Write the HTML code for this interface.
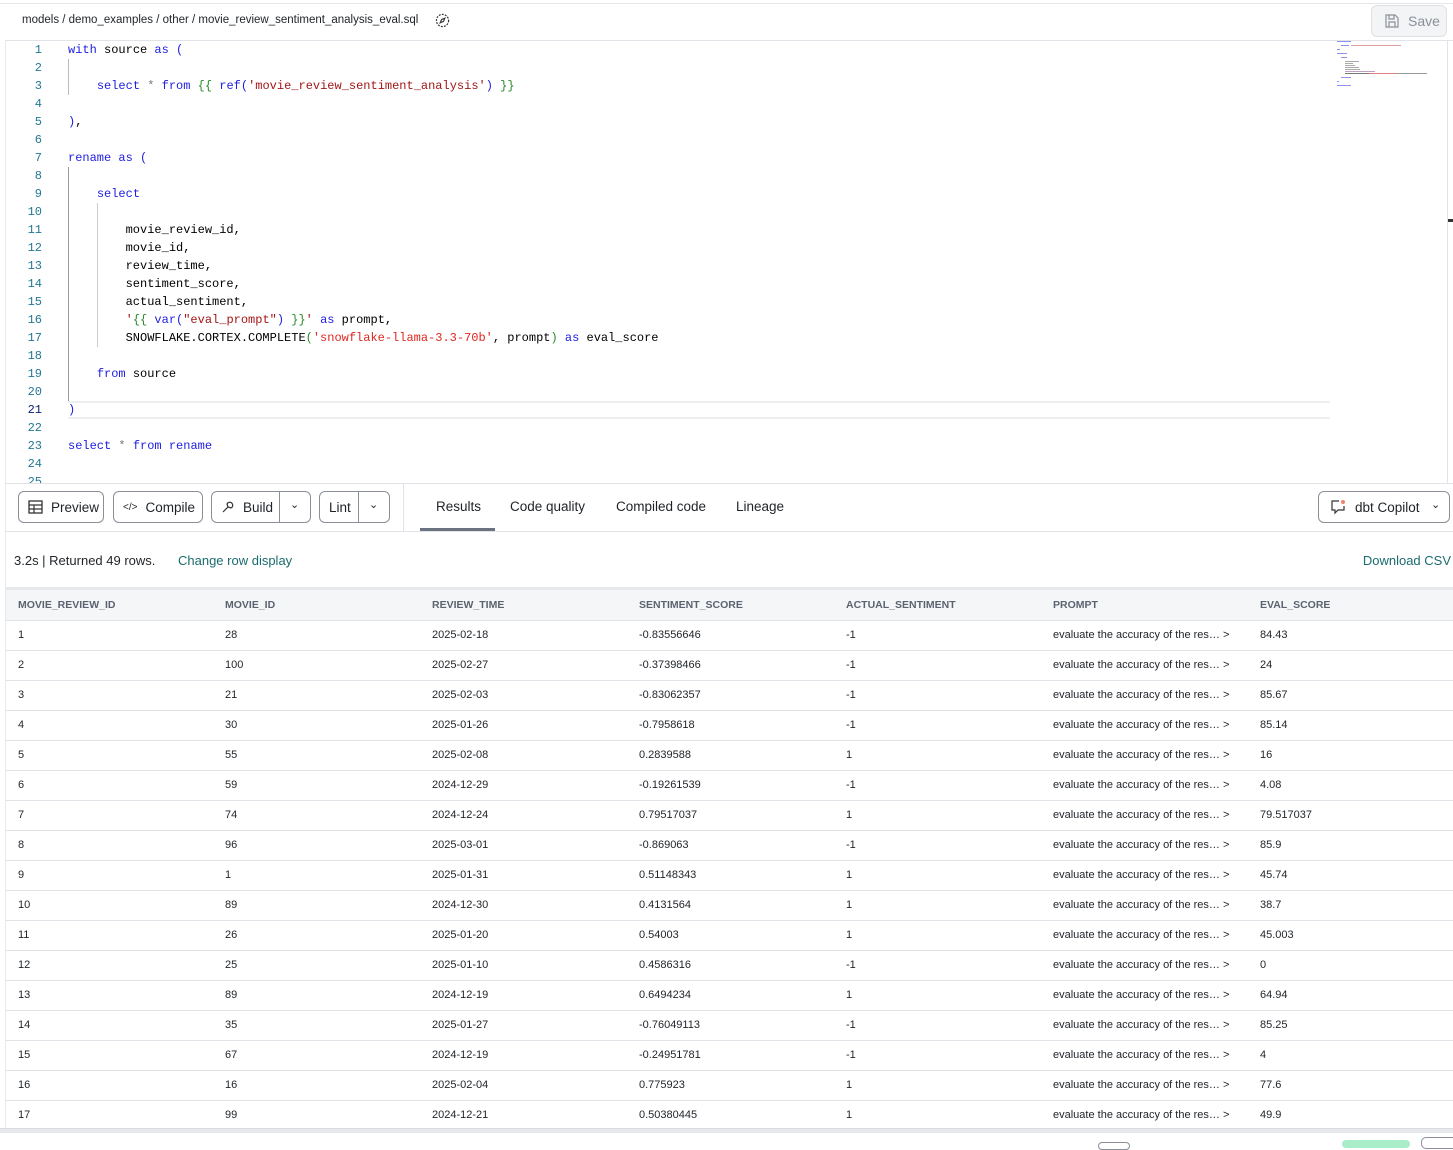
<!DOCTYPE html>
<html><head><meta charset="utf-8"><style>
*{margin:0;padding:0;box-sizing:border-box}
body{width:1453px;height:1145px;background:#fff;font-family:"Liberation Sans",sans-serif;position:relative;overflow:hidden;color:#1f2328}
.abs{position:absolute}
.code{font-family:"Liberation Mono",monospace;font-size:12px;white-space:pre;line-height:18px}
.ln{position:absolute;left:0;width:42px;text-align:right;color:#237893;font-family:"Liberation Mono",monospace;font-size:12px;line-height:18px}
.cl{position:absolute;left:68px;color:#000}
.k{color:#2020e0}.s{color:#a31515}.r{color:#e0271f}.g{color:#2a8a2a}.op{color:#777}
.btn{position:absolute;top:491px;height:32px;border:1px solid #8a8f98;border-radius:6px;font-size:13.5px;display:flex;align-items:center;color:#1f2328;background:#fff;white-space:nowrap}
.tab{position:absolute;top:499px;font-size:13.5px;color:#1f2328}
table{position:absolute;left:6px;top:590px;border-collapse:collapse;width:1447px;font-size:11px;table-layout:fixed}
td,th{height:30px;padding:0 0 0 12px;text-align:left;width:207px;border-bottom:1px solid #e1e3e8;white-space:nowrap;overflow:hidden}
th{background:#f5f6f8;font-weight:bold;color:#5c6370;font-size:10.5px;height:30px}
td{color:#1f2328}
.mm div{position:absolute;height:1px}
</style></head><body>
<div class="abs" style="left:0;top:0;width:1453px;height:4px;border-bottom:1px solid #e4e6ea"></div>
<div class="abs" style="left:22px;top:14px;font-size:11.5px;color:#1f2328">models / demo_examples / other / movie_review_sentiment_analysis_eval.sql</div>
<svg class="abs" style="left:435px;top:13px" width="15" height="15" viewBox="0 0 16 16"><circle cx="8" cy="8" r="6.5" fill="none" stroke="#333" stroke-width="1.3" stroke-dasharray="2 1.3"/><path d="M10.5 5.5 L7 7 L5.5 10.5 L9 9 Z" fill="none" stroke="#333" stroke-width="1.2"/></svg>
<div class="abs" style="left:1371px;top:5px;width:76px;height:32px;border:1px solid #dfe1e5;border-radius:6px;background:#f3f4f6;color:#8b9098;font-size:14px;display:flex;align-items:center;padding-left:12px">
<svg width="16" height="16" viewBox="0 0 16 16" style="margin-right:8px"><path d="M2 2h9l3 3v9H2z M5 2v4h5V2 M5 14v-5h6v5" fill="none" stroke="#8b9098" stroke-width="1.2"/></svg>Save</div>
<div class="abs" style="left:5px;top:40px;width:1448px;height:1px;background:#e1e3e8"></div>
<div class="abs" style="left:5px;top:40px;width:1px;height:1100px;background:#e8e9ec"></div>
<div class="abs code" style="left:0;top:41px;width:1340px;height:442px;overflow:hidden">
<div class="ln" style="top:0">1</div><div class="cl" style="top:0"><span class="k">with</span> source <span class="k">as</span> <span class="k">(</span></div>
<div class="ln" style="top:18px">2</div>
<div class="ln" style="top:36px">3</div><div class="cl" style="top:36px">    <span class="k">select</span> <span class="op">*</span> <span class="k">from</span> <span class="g">{{</span> <span class="k">ref(</span><span class="s">'movie_review_sentiment_analysis'</span><span class="k">)</span> <span class="g">}}</span></div>
<div class="ln" style="top:54px">4</div>
<div class="ln" style="top:72px">5</div><div class="cl" style="top:72px"><span class="k">)</span>,</div>
<div class="ln" style="top:90px">6</div>
<div class="ln" style="top:108px">7</div><div class="cl" style="top:108px"><span class="k">rename as (</span></div>
<div class="ln" style="top:126px">8</div>
<div class="ln" style="top:144px">9</div><div class="cl" style="top:144px">    <span class="k">select</span></div>
<div class="ln" style="top:162px">10</div>
<div class="ln" style="top:180px">11</div><div class="cl" style="top:180px">        movie_review_id,</div>
<div class="ln" style="top:198px">12</div><div class="cl" style="top:198px">        movie_id,</div>
<div class="ln" style="top:216px">13</div><div class="cl" style="top:216px">        review_time,</div>
<div class="ln" style="top:234px">14</div><div class="cl" style="top:234px">        sentiment_score,</div>
<div class="ln" style="top:252px">15</div><div class="cl" style="top:252px">        actual_sentiment,</div>
<div class="ln" style="top:270px">16</div><div class="cl" style="top:270px">        <span class="s">'</span><span class="g">{{</span> <span class="k">var(</span><span class="s">"eval_prompt"</span><span class="k">)</span> <span class="g">}}</span><span class="s">'</span> <span class="k">as</span> prompt,</div>
<div class="ln" style="top:288px">17</div><div class="cl" style="top:288px">        SNOWFLAKE.CORTEX.COMPLETE<span class="g">(</span><span class="r">'snowflake-llama-3.3-70b'</span>, prompt<span class="g">)</span> <span class="k">as</span> eval_score</div>
<div class="ln" style="top:306px">18</div>
<div class="ln" style="top:324px">19</div><div class="cl" style="top:324px">    <span class="k">from</span> source</div>
<div class="ln" style="top:342px">20</div>
<div class="ln" style="top:360px;color:#0b216f">21</div><div class="abs" style="left:68px;top:360px;width:1262px;height:18px;border-top:2px solid #eceef0;border-bottom:2px solid #eceef0"></div><div class="cl" style="top:360px"><span class="k">)</span></div>
<div class="ln" style="top:378px">22</div>
<div class="ln" style="top:396px">23</div><div class="cl" style="top:396px"><span class="k">select</span> <span class="op">*</span> <span class="k">from rename</span></div>
<div class="ln" style="top:414px">24</div>
<div class="ln" style="top:432px">25</div>
<div class="abs" style="left:68px;top:18px;width:1px;height:36px;background:#bbb"></div>
<div class="abs" style="left:68px;top:126px;width:1px;height:234px;background:#999"></div>
<div class="abs" style="left:97px;top:162px;width:1px;height:144px;background:#ccc"></div>
</div>
<div class="abs mm" style="left:1337px;top:41px;width:100px;height:50px">
<div style="left:0;top:0;width:14px;background:#9090f0"></div>
<div style="left:4px;top:4px;width:8px;background:#9090f0"></div>
<div style="left:14px;top:4px;width:50px;background:#e0a0a0"></div>
<div style="left:0;top:8px;width:3px;background:#9090f0"></div>
<div style="left:0;top:12px;width:10px;background:#9090f0"></div>
<div style="left:4px;top:16px;width:6px;background:#9090f0"></div>
<div style="left:8px;top:20px;width:14px;background:#aaa"></div>
<div style="left:8px;top:22px;width:8px;background:#aaa"></div>
<div style="left:8px;top:24px;width:10px;background:#aaa"></div>
<div style="left:8px;top:26px;width:14px;background:#aaa"></div>
<div style="left:8px;top:28px;width:15px;background:#aaa"></div>
<div style="left:8px;top:30px;width:30px;background:#c0a0c0"></div>
<div style="left:8px;top:32px;width:24px;background:#777"></div>
<div style="left:32px;top:32px;width:28px;background:#e08080"></div>
<div style="left:60px;top:32px;width:30px;background:#999"></div>
<div style="left:4px;top:36px;width:10px;background:#9090f0"></div>
<div style="left:0;top:40px;width:2px;background:#9090f0"></div>
<div style="left:0;top:44px;width:14px;background:#9090f0"></div>
</div>
<div class="abs" style="left:1447px;top:40px;width:1px;height:443px;background:#e1e3e8"></div>
<div class="abs" style="left:1448px;top:219px;width:5px;height:3px;background:#333"></div>
<div class="abs" style="left:5px;top:483px;width:1448px;height:1px;background:#e1e3e8"></div>
<div class="btn" style="left:18px;width:86px;padding-left:9px"><svg width="15" height="14" viewBox="0 0 15 14" style="margin-right:8px"><rect x="1" y="1" width="13" height="12" fill="none" stroke="#333" stroke-width="1.3"/><path d="M1 5h13M1 9h13M6 5v8" stroke="#333" stroke-width="1.2"/></svg>Preview</div>
<div class="btn" style="left:113px;width:90px;padding-left:9px"><span style="font-size:10px;margin-right:8px">&lt;/&gt;</span>Compile</div>
<div class="btn" style="left:211px;width:100px;padding-left:9px"><svg width="14" height="14" viewBox="0 0 14 14" style="margin-right:8px"><path d="M2 12 L7 7 M6 4 a3 3 0 1 1 4 4 L7 7z" fill="none" stroke="#333" stroke-width="1.2"/></svg>Build<div style="position:absolute;left:67px;top:0;width:1px;height:30px;background:#8a8f98"></div><span style="position:absolute;left:78px;top:6px;font-size:11px">&#8964;</span></div>
<div class="btn" style="left:319px;width:71px;padding-left:9px">Lint<div style="position:absolute;left:38px;top:0;width:1px;height:30px;background:#8a8f98"></div><span style="position:absolute;left:49px;top:6px;font-size:11px">&#8964;</span></div>
<div class="abs" style="left:403px;top:484px;width:1px;height:47px;background:#e1e3e8"></div>
<div class="tab" style="left:436px">Results</div>
<div class="abs" style="left:420px;top:528px;width:75px;height:3px;background:#6b7280"></div>
<div class="tab" style="left:510px">Code quality</div>
<div class="tab" style="left:616px">Compiled code</div>
<div class="tab" style="left:736px">Lineage</div>
<div class="btn" style="left:1318px;width:132px;padding-left:11px"><svg width="17" height="16" viewBox="0 0 17 16" style="margin-right:8px"><path d="M9 2H2v9h3v3l3-3h6V7" fill="none" stroke="#333" stroke-width="1.2"/><circle cx="13" cy="3" r="2" fill="#f08070"/></svg>dbt Copilot<span style="position:absolute;left:112px;top:6px;font-size:11px">&#8964;</span></div>
<div class="abs" style="left:5px;top:531px;width:1448px;height:1px;background:#e1e3e8"></div>
<div class="abs" style="left:14px;top:553px;font-size:13px;white-space:nowrap">3.2s | Returned 49 rows.</div>
<div class="abs" style="left:178px;top:553px;font-size:13px;color:#1b6b6e;white-space:nowrap">Change row display</div>
<div class="abs" style="right:2px;top:553px;font-size:13px;color:#1b6b6e;white-space:nowrap">Download CSV</div>
<div class="abs" style="left:5px;top:587px;width:1448px;height:3px;background:#e8e9ec"></div>
<table>
<tr><th>MOVIE_REVIEW_ID</th><th>MOVIE_ID</th><th>REVIEW_TIME</th><th>SENTIMENT_SCORE</th><th>ACTUAL_SENTIMENT</th><th>PROMPT</th><th>EVAL_SCORE</th></tr>
<tr><td>1</td><td>28</td><td>2025-02-18</td><td>-0.83556646</td><td>-1</td><td>evaluate the accuracy of the res… &gt;</td><td>84.43</td></tr>
<tr><td>2</td><td>100</td><td>2025-02-27</td><td>-0.37398466</td><td>-1</td><td>evaluate the accuracy of the res… &gt;</td><td>24</td></tr>
<tr><td>3</td><td>21</td><td>2025-02-03</td><td>-0.83062357</td><td>-1</td><td>evaluate the accuracy of the res… &gt;</td><td>85.67</td></tr>
<tr><td>4</td><td>30</td><td>2025-01-26</td><td>-0.7958618</td><td>-1</td><td>evaluate the accuracy of the res… &gt;</td><td>85.14</td></tr>
<tr><td>5</td><td>55</td><td>2025-02-08</td><td>0.2839588</td><td>1</td><td>evaluate the accuracy of the res… &gt;</td><td>16</td></tr>
<tr><td>6</td><td>59</td><td>2024-12-29</td><td>-0.19261539</td><td>-1</td><td>evaluate the accuracy of the res… &gt;</td><td>4.08</td></tr>
<tr><td>7</td><td>74</td><td>2024-12-24</td><td>0.79517037</td><td>1</td><td>evaluate the accuracy of the res… &gt;</td><td>79.517037</td></tr>
<tr><td>8</td><td>96</td><td>2025-03-01</td><td>-0.869063</td><td>-1</td><td>evaluate the accuracy of the res… &gt;</td><td>85.9</td></tr>
<tr><td>9</td><td>1</td><td>2025-01-31</td><td>0.51148343</td><td>1</td><td>evaluate the accuracy of the res… &gt;</td><td>45.74</td></tr>
<tr><td>10</td><td>89</td><td>2024-12-30</td><td>0.4131564</td><td>1</td><td>evaluate the accuracy of the res… &gt;</td><td>38.7</td></tr>
<tr><td>11</td><td>26</td><td>2025-01-20</td><td>0.54003</td><td>1</td><td>evaluate the accuracy of the res… &gt;</td><td>45.003</td></tr>
<tr><td>12</td><td>25</td><td>2025-01-10</td><td>0.4586316</td><td>-1</td><td>evaluate the accuracy of the res… &gt;</td><td>0</td></tr>
<tr><td>13</td><td>89</td><td>2024-12-19</td><td>0.6494234</td><td>1</td><td>evaluate the accuracy of the res… &gt;</td><td>64.94</td></tr>
<tr><td>14</td><td>35</td><td>2025-01-27</td><td>-0.76049113</td><td>-1</td><td>evaluate the accuracy of the res… &gt;</td><td>85.25</td></tr>
<tr><td>15</td><td>67</td><td>2024-12-19</td><td>-0.24951781</td><td>-1</td><td>evaluate the accuracy of the res… &gt;</td><td>4</td></tr>
<tr><td>16</td><td>16</td><td>2025-02-04</td><td>0.775923</td><td>1</td><td>evaluate the accuracy of the res… &gt;</td><td>77.6</td></tr>
<tr><td>17</td><td>99</td><td>2024-12-21</td><td>0.50380445</td><td>1</td><td>evaluate the accuracy of the res… &gt;</td><td>49.9</td></tr>
</table>
<div class="abs" style="left:0;top:1128px;width:1453px;height:17px;background:#fff"></div>
<div class="abs" style="left:0;top:1128px;width:1453px;height:5px;background:#e8e9ec;border-top:1px solid #d8dadf"></div>
<div class="abs" style="left:1342px;top:1140px;width:68px;height:8px;background:#a8ecc8;border-radius:6px"></div>
<div class="abs" style="left:1421px;top:1137px;width:40px;height:12px;border:1px solid #8a8f98;border-radius:5px"></div>
<div class="abs" style="left:1098px;top:1142px;width:32px;height:8px;border:1px solid #8a8f98;border-radius:4px"></div>
</body></html>
